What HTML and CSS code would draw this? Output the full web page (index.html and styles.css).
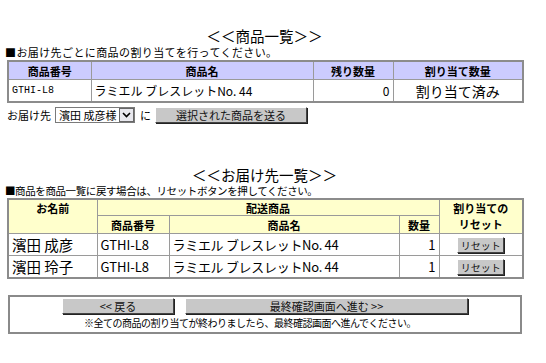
FILE: index.html
```html
<!DOCTYPE html>
<html lang="ja">
<head>
<meta charset="utf-8">
<link rel="stylesheet" href="styles.css">
</head>
<body>
<div class="page">
  <h1 class="title">＜＜商品一覧＞＞</h1>
  <p class="note note1">■お届け先ごとに商品の割り当てを行ってください。</p>
  <table class="grid grid-items">
    <colgroup><col class="c1"><col class="c2"><col class="c3"><col class="c4"></colgroup>
    <tr class="head">
      <th>商品番号</th><th>商品名</th><th>残り数量</th><th>割り当て数量</th>
    </tr>
    <tr class="row">
      <td class="code">GTHI-L8</td>
      <td class="name">ラミエル ブレスレットNo. 44</td>
      <td class="num">0</td>
      <td class="done">割り当て済み</td>
    </tr>
  </table>
  <div class="send">
    <span>お届け先</span>
    <span class="select"><span class="select-text">濱田 成彦様</span><span class="select-arrow"><svg width="9" height="6" viewBox="0 0 9 6"><path d="M1 1 L4.5 4.5 L8 1" fill="none" stroke="#000" stroke-width="1.6"/></svg></span></span>
    <span class="ni">に</span>
    <span class="btn btn-send">選択された商品を送る</span>
  </div>

  <h1 class="title title2">＜＜お届け先一覧＞＞</h1>
  <p class="note note2">■商品を商品一覧に戻す場合は、リセットボタンを押してください。</p>
  <table class="grid grid-dest">
    <colgroup><col class="d1"><col class="d2"><col class="d3"><col class="d4"><col class="d5"></colgroup>
    <tr class="head h1">
      <th rowspan="2" class="top">お名前</th>
      <th colspan="3">配送商品</th>
      <th rowspan="2" class="top reset-head">割り当ての<br>リセット</th>
    </tr>
    <tr class="head h2">
      <th>商品番号</th><th>商品名</th><th>数量</th>
    </tr>
    <tr class="row2">
      <td class="person">濱田 成彦</td>
      <td class="code2">GTHI-L8</td>
      <td class="name2">ラミエル ブレスレットNo. 44</td>
      <td class="num">1</td>
      <td class="center"><span class="btn btn-reset">リセット</span></td>
    </tr>
    <tr class="row2">
      <td class="person">濱田 玲子</td>
      <td class="code2">GTHI-L8</td>
      <td class="name2">ラミエル ブレスレットNo. 44</td>
      <td class="num">1</td>
      <td class="center"><span class="btn btn-reset">リセット</span></td>
    </tr>
  </table>

  <div class="footer">
    <div class="footer-buttons">
      <span class="btn btn-back">&lt;&lt; 戻る</span>
      <span class="btn btn-next">最終確認画面へ進む &gt;&gt;</span>
    </div>
    <p class="footer-note">※全ての商品の割り当てが終わりましたら、最終確認画面へ進んでください。</p>
  </div>
</div>
</body>
</html>
```

FILE: styles.css
```css
html, body {
  margin: 0;
  padding: 0;
  background: #fff;
}
body {
  font-family: "Noto Sans CJK JP", "Noto Sans", sans-serif;
  color: #000;
  font-size: 12px;
}
.page {
  width: 515px;
  padding: 26px 0 0 7px;
}
.title {
  margin: 0;
  font-size: 14.5px;
  font-weight: normal;
  line-height: 20px;
  text-align: center;
}
.title2 {
  margin-top: 42px;
}
.note {
  margin: 0;
  font-size: 11px;
  line-height: 12px;
  margin-left: -2px;
  white-space: nowrap;
}
.note1 {
  letter-spacing: 0.4px;
}
.note2 {
  font-size: 10.5px;
  letter-spacing: -0.4px;
}
.grid {
  border-collapse: collapse;
  width: 515px;
  table-layout: fixed;
  border: 2px solid #8c8c8c;
}
.grid th, .grid td {
  border: 1px solid #9a9a9a;
  padding: 0 3px;
  white-space: nowrap;
}
.grid-items {
  margin-top: 2px;
}
.grid-items .c1 { width: 83px; }
.grid-items .c2 { width: 222px; }
.grid-items .c3 { width: 80px; }
.grid-items .c4 { width: 130px; }
.grid-items .head th {
  background: #ccccff;
  height: 17px;
  font-size: 11px;
  font-weight: bold;
  line-height: 14px;
}
.grid-items .row td {
  height: 21px;
}
.code {
  font-family: "Liberation Mono", "DejaVu Sans Mono", monospace;
  font-size: 10px;
}
.name {
  font-size: 12px;
}
.num {
  text-align: right;
  font-size: 12px;
}
.done {
  text-align: center;
  font-size: 14px;
}
.send {
  display: flex;
  align-items: center;
  margin-top: 3px;
  height: 17px;
  font-size: 11px;
}
.select {
  display: inline-flex;
  align-items: stretch;
  margin-left: 4px;
  width: 80px;
  height: 16px;
  border: 1px solid #7a7a7a;
  box-sizing: border-box;
  background: #fff;
}
.select-text {
  flex: 1;
  font-size: 11px;
  line-height: 14px;
  padding-left: 3px;
}
.select-arrow {
  width: 13px;
  border: 1px solid #666;
  background: #e8e8ee;
  display: flex;
  align-items: center;
  justify-content: center;
}
.ni {
  margin-left: 5px;
}
.btn {
  display: inline-flex;
  align-items: center;
  justify-content: center;
  background: #c8c8c8;
  border: 1px solid;
  border-color: #fff #444 #444 #fff;
  box-shadow: 1px 1px 0 #222;
  box-sizing: border-box;
  font-size: 11px;
  color: #111;
}
.btn-send {
  margin-left: 4px;
  width: 152px;
  height: 16px;
}
.grid-dest {
  margin-top: 1px;
}
.grid-dest .d1 { width: 89px; }
.grid-dest .d2 { width: 72px; }
.grid-dest .d3 { width: 230px; }
.grid-dest .d4 { width: 40px; }
.grid-dest .d5 { width: 84px; }
.grid-dest .head th {
  background: #ffffcc;
  font-size: 11px;
  font-weight: bold;
  line-height: 14px;
}
.grid-dest .h1 th { height: 15px; }
.grid-dest .h2 th { height: 17px; }
.grid-dest th.top {
  vertical-align: top;
  padding-top: 1px;
}
.grid-dest th.reset-head {
  line-height: 16px;
  padding-top: 0;
}
.row2 td {
  height: 21px;
}
.person {
  font-size: 14.5px;
}
.code2 {
  font-size: 13px;
}
.name2 {
  font-size: 13px;
  letter-spacing: -0.3px;
}
.row2 .num {
  font-size: 13px;
}
.center {
  text-align: center;
}
.btn-reset {
  width: 47px;
  height: 16px;
  font-size: 10px;
}
.footer {
  margin-top: 16px;
  margin-left: 1px;
  width: 514px;
  border: 2px solid #8a8a8a;
  box-sizing: border-box;
  padding: 1px 0 2px;
}
.footer-buttons {
  display: flex;
  justify-content: center;
  gap: 11px;
}
.btn-back {
  width: 112px;
  height: 16px;
}
.btn-next {
  width: 283px;
  height: 16px;
}
.footer-note {
  margin: 2px 0 0;
  font-size: 10px;
  letter-spacing: -0.5px;
  line-height: 14px;
  text-align: center;
  padding-right: 30px;
  white-space: nowrap;
}
```
